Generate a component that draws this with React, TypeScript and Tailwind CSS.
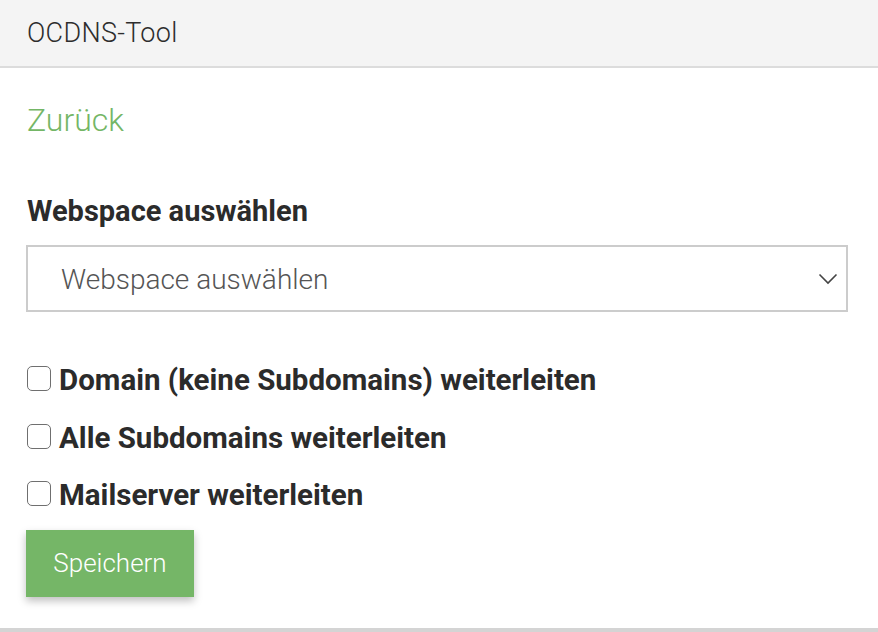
import { useState } from "react";

const options = [
	"Domain (keine Subdomains) weiterleiten",
	"Alle Subdomains weiterleiten",
	"Mailserver weiterleiten",
];

export default function App() {
	const [checked, setChecked] = useState<boolean[]>([false, false, false]);

	return (
		<div className="w-[878px] h-[632px] bg-white font-['Roboto',sans-serif] text-[#333] border-b-4 border-[#d4d4d4] flex flex-col">
			<div className="h-[68px] shrink-0 bg-[#f4f4f4] border-b-2 border-[#dcdcdc] flex items-center px-[27px]">
				<span className="text-[27px] font-light tracking-[0.3px] text-[#2d2d2d]">OCDNS-Tool</span>
			</div>
			<div className="pl-[26px] pr-[30px] flex flex-col">
				<a href="#" className="mt-[32px] ml-[1px] text-[32px] leading-[40px] font-light text-[#74b666]">
					Zurück
				</a>
				<label className="mt-[53px] ml-[1px] text-[29px] leading-[36px] font-bold text-[#2b2b2b]">Webspace auswählen</label>
				<div className="mt-[16px] h-[67px] border-2 border-[#cccccc] flex items-center justify-between pl-[33px] pr-[6px]">
					<span className="text-[28px] font-light text-[#555] mt-[3px]">Webspace auswählen</span>
					<svg width="20" height="12" viewBox="0 0 20 12" className="mr-[2px]">
						<polyline points="1.5,1.5 10,10 18.5,1.5" fill="none" stroke="#444" strokeWidth="1.6" />
					</svg>
				</div>
				<div className="mt-[52px] flex flex-col gap-[28.5px]">
					{options.map((o, i) => (
						<label key={o} className="flex items-center gap-[8px] cursor-pointer" onClick={() => setChecked(checked.map((c, j) => (j === i ? !c : c)))}>
							<span className="ml-[1px] w-[24px] h-[25px] rounded-[5px] border-[1.5px] border-[#6f6f6f] bg-white shrink-0" />
							<span className="text-[29.5px] leading-[26px] font-bold text-[#2b2b2b] mt-[3px]">{o}</span>
						</label>
					))}
				</div>
				<button className="mt-[22px] w-[168px] h-[67px] bg-[#75b667] text-white text-[26px] font-light shadow-[0_4px_8px_rgba(0,0,0,0.25)]">
					Speichern
				</button>
			</div>
		</div>
	);
}
